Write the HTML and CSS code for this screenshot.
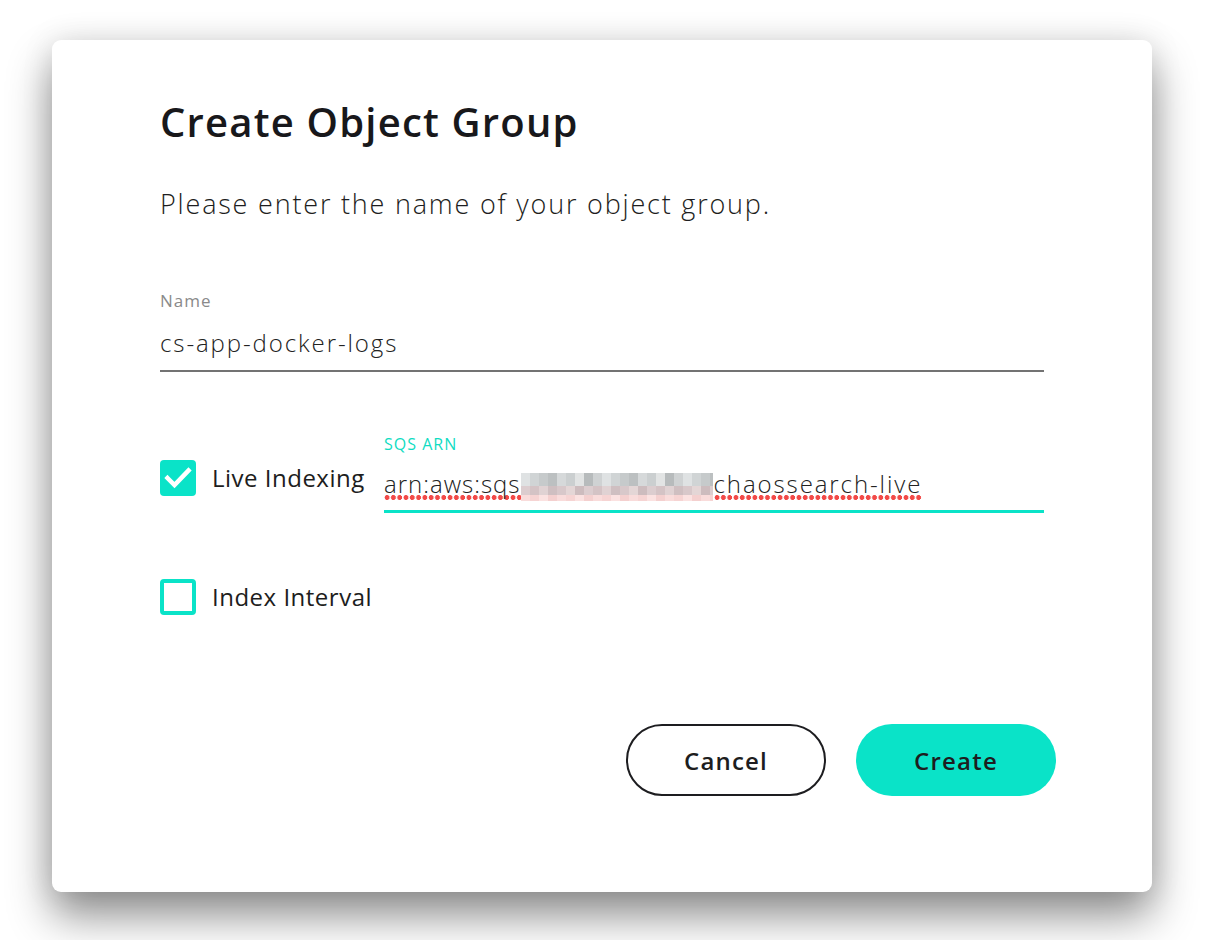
FILE: index.html
```html
<!DOCTYPE html>
<html lang="en">
<head>
<meta charset="utf-8">
<title>Create Object Group</title>
<link rel="stylesheet" href="styles.css">
</head>
<body>
<div class="card">
  <h1 class="title">Create Object Group</h1>
  <p class="subtitle">Please enter the name of your object group.</p>

  <div class="field name-field">
    <div class="field-label">Name</div>
    <div class="field-input">cs-app-docker-logs</div>
  </div>

  <div class="option-row">
    <div class="check-item live">
      <span class="checkbox checked">
        <svg width="36" height="36" viewBox="0 0 36 36"><path d="M7.5 18 L14.5 25 L28.5 10.5" fill="none" stroke="#fff" stroke-width="4.5" stroke-linecap="square" stroke-linejoin="miter"/></svg>
      </span>
      <span class="check-text">Live Indexing</span>
    </div>
    <div class="field arn-field">
      <div class="field-label teal">SQS ARN</div>
      <div class="field-input focused"><span class="spell prefix">arn:aws:sqs</span><span class="mosaic"></span><span class="spell">chaossearch-live</span></div>
    </div>
  </div>

  <div class="check-item interval">
    <span class="checkbox"></span>
    <span class="check-text">Index Interval</span>
  </div>

  <div class="actions">
    <button class="btn cancel">Cancel</button>
    <button class="btn create">Create</button>
  </div>
</div>
</body>
</html>
```

FILE: styles.css
```css
html, body {
  margin: 0;
  padding: 0;
  background: #ffffff;
}

body {
  box-sizing: border-box;
  height: 940px;
  overflow: hidden;
  font-family: "Open Sans", "Noto Sans", sans-serif;
  color: #1d1d20;
  padding: 40px 0 0 52px;
}

.card {
  box-sizing: border-box;
  width: 1100px;
  height: 852px;
  background: #fff;
  border-radius: 9px;
  padding: 58px 108px 0 108px;
  box-shadow: 0 24px 44px rgba(0, 0, 0, 0.44), 0 0 32px rgba(0, 0, 0, 0.10);
  display: flex;
  flex-direction: column;
}

.title {
  margin: 0;
  font-size: 40px;
  line-height: 48px;
  font-weight: 600;
  letter-spacing: 1.2px;
  color: #18181b;
}

.subtitle {
  margin: 40px 0 0 0;
  font-size: 27px;
  line-height: 36px;
  font-weight: 300;
  letter-spacing: 1.8px;
  color: #1d1d20;
}

.field-label {
  font-size: 17px;
  line-height: 20px;
  letter-spacing: 1px;
  color: #8a8a8a;
  font-weight: 400;
}

.field-label.teal {
  color: #10dcc2;
  font-size: 16px;
}

.field-input {
  font-size: 24px;
  line-height: 36px;
  font-weight: 300;
  letter-spacing: 1.9px;
  color: #222;
  border-bottom: 2px solid #737373;
  padding-bottom: 9px;
  white-space: nowrap;
}

.name-field {
  margin-top: 69px;
}

.name-field .field-input {
  margin-top: 14px;
}

.option-row {
  display: flex;
  align-items: flex-start;
  margin-top: 62px;
}

.check-item {
  display: flex;
  align-items: center;
  gap: 16px;
}

.check-item.live {
  width: 224px;
  flex: none;
  margin-top: 26px;
}

.checkbox {
  box-sizing: border-box;
  width: 36px;
  height: 36px;
  border-radius: 4px;
  border: 4px solid #0ae3c8;
  display: flex;
  align-items: center;
  justify-content: center;
  flex: none;
}

.checkbox.checked {
  background: #0ae3c8;
  border: none;
}

.check-text {
  font-size: 24px;
  line-height: 36px;
  font-weight: 400;
  letter-spacing: 0.5px;
  color: #1d1d20;
}

.arn-field {
  flex: 1;
}

.arn-field .field-input {
  margin-top: 12px;
  border-bottom: 3px solid #0ae3c8;
  padding-bottom: 8px;
}

.spell {
  background-image: radial-gradient(circle at 3px 2.5px, #f24a48 2.2px, rgba(242, 74, 72, 0) 2.7px);
  background-size: 6.3px 5px;
  background-repeat: repeat-x;
  background-position: 0 100%;
}

.spell.prefix {
  letter-spacing: 1px;
}

.mosaic {
  display: inline-block;
  width: 192px;
  height: 28px;
  vertical-align: -8px;
  margin-right: 1px;
  background:
    repeating-linear-gradient(90deg, #dfe2e3 0 9px, #d0d4d5 9px 18px, #c6cacb 18px 27px, #bcc0c1 27px 36px, #d6d9da 36px 45px, #cbcfd0 45px 54px, #e2e4e4 54px 63px, #b7bbbc 63px 72px, #cfd2d3 72px 81px) 0 0 / 100% 13px no-repeat,
    repeating-linear-gradient(90deg, #dccdcf 0 9px, #d4c3c5 9px 18px, #e0d2d3 18px 27px, #cfbfc1 27px 36px, #d8c8ca 36px 45px, #e4d6d6 45px 54px, #cdbcbe 54px 63px) 0 13px / 100% 9px no-repeat,
    repeating-linear-gradient(90deg, #f9dcdb 0 9px, #f6d4d3 9px 18px, #fbe2e1 18px 27px, #f4d0cf 27px 36px) 0 22px / 100% 6px no-repeat;
}

.check-item.interval {
  margin-top: 66px;
}

.actions {
  display: flex;
  justify-content: flex-end;
  gap: 30px;
  margin-top: 109px;
  margin-right: -12px;
}

.btn {
  box-sizing: border-box;
  width: 200px;
  height: 72px;
  border-radius: 36px;
  font-family: "Open Sans", "Noto Sans", sans-serif;
  font-size: 24px;
  font-weight: 600;
  letter-spacing: 1.2px;
  color: #1d1d20;
  cursor: pointer;
}

.btn.cancel {
  background: #fff;
  border: 2px solid #1d1d20;
}

.btn.create {
  background: #0ae3c8;
  border: none;
}
```
